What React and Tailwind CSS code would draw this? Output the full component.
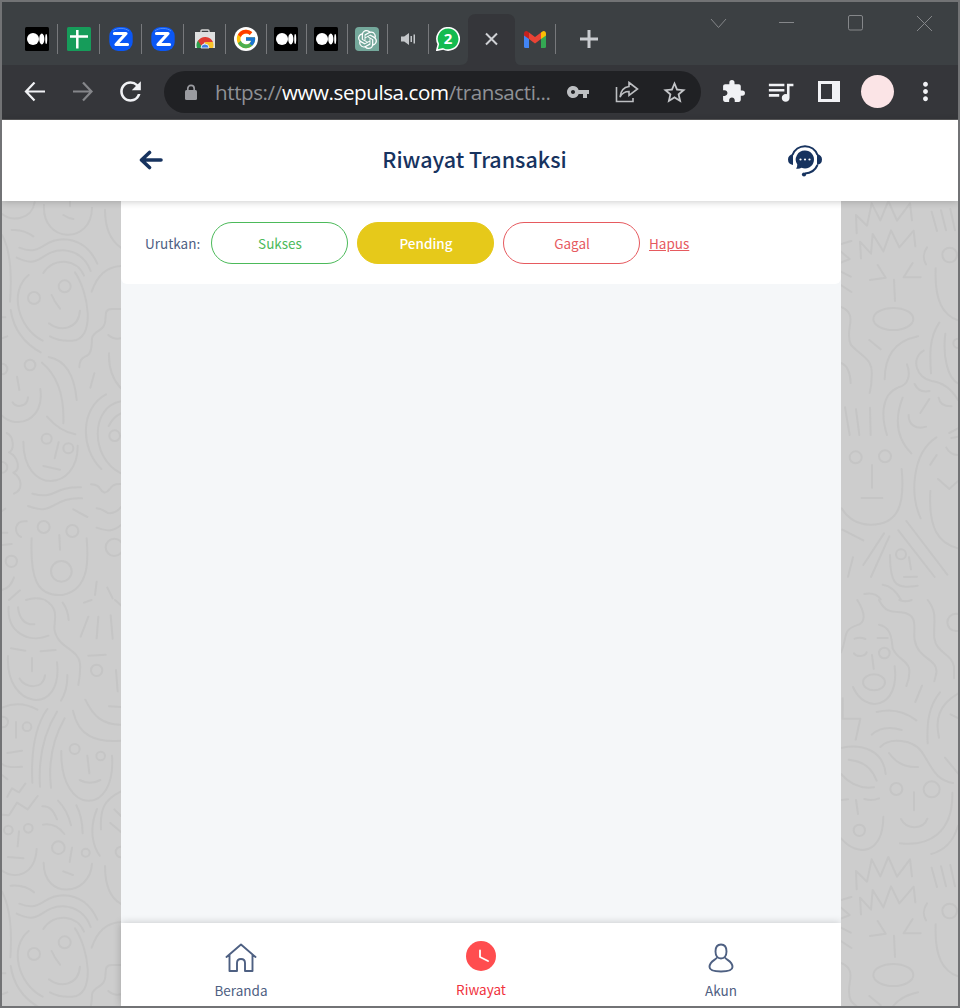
import { MdExtension, MdQueueMusic, MdVpnKey, MdStarBorder, MdMoreVert, MdRefresh } from 'react-icons/md';
import { SiOpenai } from 'react-icons/si';
import { FcGoogle } from 'react-icons/fc';

const Sep = () => <span className="h-[30px] w-px bg-[#77797c]" />;

function Medium() {
  return (
    <svg viewBox="0 0 24 24" className="size-6">
      <rect width="24" height="24" rx="1.5" fill="#000" />
      <circle cx="8" cy="12" r="6" fill="#fff" />
      <ellipse cx="16.8" cy="12" rx="2.6" ry="5.4" fill="#fff" />
      <ellipse cx="21.2" cy="12" rx="1" ry="5" fill="#fff" />
    </svg>
  );
}

function Sheets() {
  return (
    <svg viewBox="0 0 24 24" className="size-6">
      <rect width="24" height="24" rx="1.5" fill="#169c5a" />
      <path d="M3 9.6H21M10.3 3V21.5" stroke="#fff" strokeWidth="2.5" />
    </svg>
  );
}

function Zed() {
  return (
    <svg viewBox="0 0 24 24" className="size-6">
      <rect x=".3" width="23.4" height="24" rx="9" fill="#0b57f5" />
      <path d="M4 4C8 .5 16 .5 20 4" stroke="#4f8cf8" strokeWidth="1" fill="none" />
      <path d="M5.5 6.500H17L7 17.500H18.500" fill="none" stroke="#fff" strokeWidth="3.2" strokeLinejoin="round" strokeLinecap="round" />
    </svg>
  );
}

function Store() {
  return (
    <svg viewBox="0 0 24 24" className="size-6">
      <path d="M8 6V4Q8 3 9 3H15Q16 3 16 4V6" stroke="#d5d5d5" strokeWidth="1.4" fill="none" />
      <path d="M2 5H22V21H2Z" fill="#dfe0e0" />
      <path d="M4 21A8 8 0 0 1 5.5 13L10 21Z" fill="#2ca04c" />
      <path d="M12 15H20A8 8 0 0 1 20 21H12Z" fill="#f9c32b" />
      <path d="M5 14A8.5 8.5 0 0 1 20 15H12L8.5 19Z" fill="#df3c33" />
      <path d="M8 21A4 4 0 0 1 16 21Z" fill="#3d7fe6" stroke="#fff" strokeWidth=".8" />
    </svg>
  );
}

function Whatsapp() {
  return (
    <svg viewBox="0 0 24 24" className="size-6 shrink-0">
      <path d="M12.2 0.7A11.2 11.2 0 1 1 7 21.9L.8 23.3 2.3 17.2A11.2 11.2 0 0 1 12.2.7Z" fill="#14bb50" stroke="#fff" strokeWidth="1.6" />
      <text x="12" y="17.4" textAnchor="middle" fill="#fff" fontFamily="Open Sans, sans-serif" fontSize="15" fontWeight="700">2</text>
    </svg>
  );
}

function Gmail() {
  return (
    <svg viewBox="0 0 22 17" className="h-[17px] w-[22px]">
      <path d="M0 3V15.5Q0 17 1.5 17H5V6Z" fill="#4285f4" />
      <path d="M22 3V15.5Q22 17 20.500 17H17V6Z" fill="#34a853" />
      <path d="M5 1.500L11 6 17 1.500V8L11 12.500 5 8Z" fill="#ea4335" />
      <path d="M0 3Q0 0 2.500 0 3.500 0 5 1.500V8L0 4.500Z" fill="#c5221f" />
      <path d="M22 3Q22 0 19.500 0 18.500 0 17 1.500V8L22 4.500Z" fill="#fbbc04" />
    </svg>
  );
}

function TabStrip() {
  return (
    <div className="flex h-[63px] bg-[#3c4043]">
      <div className="flex h-[50px] w-[465px] items-center self-start pl-[23px] pt-[24px]">
        <div className="flex w-[442px] items-center">
          <div className="flex w-[32px]"><Medium /></div><Sep />
          <div className="flex w-[41px] justify-center"><Sheets /></div><Sep />
          <div className="flex w-[41px] justify-center"><Zed /></div><Sep />
          <div className="flex w-[41px] justify-center"><Zed /></div><Sep />
          <div className="flex w-[41px] justify-center"><Store /></div><Sep />
          <div className="flex w-[40px] justify-center pr-px">
            <span className="flex size-6 items-center justify-center rounded-full bg-white"><FcGoogle size={22} /></span>
          </div><Sep />
          <div className="flex w-[39px] justify-center pr-px"><Medium /></div><Sep />
          <div className="flex w-[40px] justify-center pr-[2px]"><Medium /></div><Sep />
          <div className="flex w-[39px] justify-center pr-px">
            <span className="flex size-6 items-center justify-center rounded-[4px] rounded-br-none bg-[#74a89b] text-white"><SiOpenai size={19} /></span>
          </div><Sep />
          <div className="flex w-[40px] justify-center pr-px">
            <svg viewBox="0 0 16 16" className="size-4" fill="#c4c7ca">
              <path d="M1 5.500H4.200L9 2V14L4.200 10.500H1Z" />
              <path d="M10.500 5H12V11H10.500ZM13.500 3.500H15V12.500H13.500Z" />
            </svg>
          </div><Sep />
          <div className="flex w-[38px] justify-center"><Whatsapp /></div>
        </div>
      </div>
      <svg viewBox="0 0 60 51" className="-ml-[7px] mt-3 h-[51px] w-[60px]">
        <path d="M0 51Q8 51 8 43V8Q8 0 16 0H47Q55 0 55 8V43Q55 51 60 51Z" fill="#35363a" />
        <path d="M26 19.500L37 30.500M37 19.500L26 30.500" stroke="#cfd1d4" strokeWidth="2" />
      </svg>
      <div className="mt-3 flex h-[50px] items-center pl-[4px]">
        <Gmail />
        <span className="ml-[9px] h-[30px] w-px bg-[#77797c]" />
        <svg viewBox="0 0 20 20" className="ml-[23px] size-5"><path d="M1 10H19M10 1V19" stroke="#c9ccd0" strokeWidth="3" /></svg>
      </div>
      <svg viewBox="0 0 240 40" className="ml-auto mr-[8px] h-10 w-[240px]" fill="none" stroke="#85878a" strokeWidth="1">
        <path d="M1 17L8.500 25.500 16 17M69 20.500H84M207 14L222 29M222 14L207 29" />
        <rect x="138.500" y="13.500" width="14" height="14.500" rx="1.500" />
      </svg>
    </div>
  );
}

function Toolbar() {
  return (
    <div className="flex h-[55px] items-center border-b border-[#59595b] bg-[#35363a] pl-[22px] text-[#f1f2f5]">
      <svg viewBox="0 0 22 20" className="h-5 w-[22px]" fill="none" stroke="#f1f2f5" strokeWidth="2.200"><path d="M10.500 .5L2 9.500 10.500 18.500M2 9.500H21" /></svg>
      <svg viewBox="0 0 22 20" className="ml-[26px] h-5 w-[22px]" fill="none" stroke="#85868a" strokeWidth="2.200"><path d="M11 .5L19.500 9.500 11 18.500M1 9.500H19.500" /></svg>
      <MdRefresh size={31} className="mb-px ml-[21px]" />
      <div className="ml-[18px] flex h-[42px] w-[537px] items-center rounded-full bg-[#202124] pl-[20px]">
        <svg viewBox="0 0 14 17" className="h-[17px] w-[14px]"><rect x="1" y="6" width="12" height="10" rx="1.5" fill="#9a9ba0" /><path d="M3.800 7V4.500A3.200 3.200 0 0 1 10.200 4.500V7" fill="none" stroke="#9a9ba0" strokeWidth="1.700" /></svg>
        <span className="ml-[17px] w-[340px] whitespace-nowrap font-['Open_Sans',sans-serif] text-[20.600px] tracking-[-0.420px] text-[#8f9196]">
          https://<span className="text-white">www.sepulsa.com</span>/transacti...
        </span>
        <MdVpnKey size={24} className="ml-[11px] text-[#bdbfc2]" />
        <svg viewBox="0 0 24 22" className="ml-[25px] h-[22px] w-6" fill="none" stroke="#bdbfc2" strokeWidth="1.600">
          <path d="M1.500 6V20.500H18V17M14 1.500L22.500 8 14 14.500V10.500Q8 10.500 5 16 6 6.500 14 5.500Z" />
        </svg>
        <MdStarBorder size={27} className="ml-[22px] text-[#c4c6c9]" />
      </div>
      <MdExtension size={25} className="ml-[20px] mb-px" />
      <MdQueueMusic size={31} className="ml-[19px] mb-px" />
      <svg viewBox="0 0 22 21" className="mb-px ml-[22px] h-[21px] w-[22px]"><path d="M0 0H22V21H0ZM3 3V18H14V3Z" fill="#f1f2f5" fillRule="evenodd" /></svg>
      <span className="mb-px ml-[21px] size-[33px] rounded-full bg-[#fbe4e6]" />
      <MdMoreVert size={29} className="mb-px ml-[17px]" />
    </div>
  );
}

function Headset() {
  return (
    <svg viewBox="0 0 36 34" className="h-[34px] w-9" fill="none" stroke="#17335f">
      <path d="M5.500 11A13.300 13.300 0 0 1 30.500 11" strokeWidth="2" />
      <path d="M30.500 21Q27 29 18 29.500" strokeWidth="2" />
      <path d="M6 10Q1 11 1 15.500T6 21ZM30 10Q35 11 35 15.500T30 21Z" fill="#17335f" stroke="none" />
      <path d="M18 6.500A9 9 0 1 1 14.500 23.800Q12 25.200 9 24.500 10.500 22.500 10.300 20.500A9 9 0 0 1 18 6.500Z" fill="#17335f" stroke="none" />
      <circle cx="17" cy="30.500" r="2.100" fill="#17335f" stroke="none" />
      <g fill="#fff" stroke="none"><circle cx="13.500" cy="15.500" r="1.100" /><circle cx="18" cy="15.500" r="1.100" /><circle cx="22.500" cy="15.500" r="1.100" /></g>
    </svg>
  );
}

function LeftDoodles() {
  return (
    <svg viewBox="6 18 357 2415" className="h-[805px] w-[119px] shrink-0 bg-[#cdcdcd]" fill="none" stroke="#c5c5c5" strokeWidth="6" strokeLinecap="round" strokeLinejoin="round">
      <path d="M6 57C35 80 95 75 104 22M132 30C125 145 275 150 276 38M190 60Q205 70 220 72M35 105Q70 102 100 124M210 18V34M315 44Q315 125 363 158M6 120Q40 180 30 320" />
      <g id="wavy-face">
        <path d="M58 158C125 185 125 133 190 133Q260 135 292 206M50 188C125 225 120 165 190 166Q250 170 272 228M130 234C160 185 230 190 252 242M86 240C25 290 55 400 128 437M225 232C265 290 290 435 215 437Q180 440 150 424M147 385C180 410 235 405 240 347M155 300Q163 320 180 341M275 290C290 245 320 215 363 213M32 345Q45 430 122 472" />
        <circle cx="102" cy="309" r="18" /><circle cx="194" cy="274" r="18" />
        <path d="M363 342H335C305 342 325 375 310 395C300 410 280 410 276 430C275 470 270 480 255 485Q238 492 238 517M6 367H16M6 430L22 424M325 420Q340 434 363 430" />
      </g>
      <circle cx="90" cy="510" r="16" /><circle cx="6" cy="522" r="16" />
      <path d="M146 486Q220 500 230 615M126 503Q195 560 190 685M327 475Q325 540 363 580M283 535L271 578M51 545L58 585M38 622C50 640 82 635 84 607M6 662C50 705 135 675 121 582M141 665Q180 710 226 718M318 598C240 640 240 760 304 822M363 619C270 635 270 790 363 835M326 693Q340 665 363 655M20 714C43 725 43 765 27 772C55 785 63 825 40 833C67 850 70 885 42 896M70 740C70 900 235 890 233 752M176 742L164 790M130 813L180 824" />
      <circle cx="140" cy="731" r="15" /><circle cx="205" cy="760" r="15" /><circle cx="344" cy="722" r="16" /><circle cx="6" cy="817" r="16" />
      <path d="M97 896C170 915 155 875 243 877M84 933C165 965 155 905 246 910M220 943L262 966M273 868C305 870 295 885 313 893C335 890 325 865 363 867M290 940C310 940 318 955 330 955Q350 953 363 936M290 998C325 1010 340 1010 363 990M80 979C42 975 40 1015 63 1026M6 948L16 941M6 1013H22M6 1050L35 1047M95 1030C90 1150 110 1205 187 1200C270 1185 265 1090 260 1030M178 1020L180 1064" />
      <circle cx="131" cy="996" r="18" /><circle cx="217" cy="1008" r="18" /><circle cx="184" cy="1129" r="31" /><circle cx="34" cy="1099" r="17" /><circle cx="343" cy="1057" r="26" />
      <path d="M6 1185Q32 1178 42 1147M27 1215L60 1186M78 1215Q105 1205 130 1213M290 1160L285 1200M322 1178L338 1210" />
      <g transform="translate(0 1215)">
        <path d="M26 20C20 100 90 130 145 107M54 22Q60 75 103 73M135 0C175 25 165 50 163 85C170 145 235 145 240 190Q242 220 235 255M188 8Q204 30 206 60M252 8L275 0M265 50L242 110M295 50L290 115M332 46L338 116M345 0L363 16M33 145L76 152M122 154L167 150M96 174V214M24 168C15 330 190 350 171 187M59 236C75 265 130 270 135 226M202 225Q203 270 183 302M265 167L317 164M348 210L353 274M256 299C280 350 310 375 363 374M219 332C235 410 290 428 363 422M327 319L363 321M6 323Q60 300 112 329M48 366V413M22 459L66 452M6 492Q20 505 66 500M6 525L22 538M142 327Q90 400 97 548M171 335Q112 430 120 560M194 355Q140 450 153 563M184 453C180 650 350 650 336 467M262 467L268 520M239 540Q270 557 301 540M22 590L36 565 57 577 76 551M6 644L27 646 51 608 83 628 113 588M57 694L53 739M24 771L70 775M6 812C45 840 105 825 110 747M127 619C155 618 163 640 171 658M174 602Q202 630 213 676M229 616Q247 650 248 700M129 674Q167 668 193 702M131 788C130 900 270 890 276 791M216 743L209 786M190 814L219 825M291 627C265 690 280 740 299 767M363 574C310 600 300 630 303 688M343 628L363 648M331 669L363 696M315 798Q315 885 363 912M32 857Q75 853 102 877M6 875Q40 940 31 1072" />
        <circle cx="290" cy="211" r="17" /><circle cx="8" cy="366" r="16" /><circle cx="81" cy="380" r="13" /><circle cx="224" cy="447" r="15" /><circle cx="302" cy="468" r="13" /><circle cx="25" cy="690" r="13" /><circle cx="85" cy="685" r="13" /><circle cx="175" cy="743" r="19" /><circle cx="257" cy="758" r="12" /><circle cx="363" cy="756" r="16" />
      </g>
      <use href="#wavy-face" y="1968" />
    </svg>
  );
}

function RightDoodles() {
  return (
    <svg viewBox="18 18 351 2415" className="h-[805px] w-[117px] shrink-0 bg-[#cdcdcd]" fill="none" stroke="#c5c5c5" strokeWidth="6" strokeLinecap="round" strokeLinejoin="round">
      <g id="spiky-face">
        <path d="M65 115L63 60 96 92 110 25 136 76 160 18 186 77 225 25 231 76M78 190L75 140 108 176 113 117 145 169 168 106 193 157 236 107 241 154M128 210L152 248 105 255M233 204L206 247H257M177 254L180 318M290 50L306 108M318 46L333 106M346 42L360 106M276 157C263 175 265 195 273 208M302 220C298 320 325 360 369 376M18 147L49 138M18 170L44 192 18 203M18 230L47 245M18 270L49 291" />
        <circle cx="344" cy="180" r="22" /><ellipse cx="175" cy="372" rx="60" ry="33" />
        <path d="M18 336C75 360 25 405 48 450C85 490 115 490 110 545Q110 570 104 594M103 435L137 463M249 424C175 440 150 485 149 553" />
      </g>
      <path d="M18 504Q45 515 47 564M313 383C280 430 285 490 288 535M331 416C322 490 340 550 369 565M266 467C225 490 245 550 290 558Q340 565 369 615M216 508C228 540 220 570 190 577C135 600 140 670 156 720M203 608C175 680 190 735 229 775M239 567Q252 595 284 588M311 608Q315 635 350 634M283 612L256 654M221 660C220 690 245 705 273 695M30 637L44 720M63 643L73 720M105 638L107 720M111 810V878M80 909H142M200 822C210 930 190 990 105 989Q50 988 20 940M304 727C230 775 225 900 257 970M369 700L343 714M369 725L349 729M334 758Q345 780 369 780M305 780L286 809M309 852L343 882 369 858M286 888C280 1000 310 1045 369 1060M22 1004L85 1036M54 1087L39 1145M147 1015L85 1110M163 1024L108 1146M190 1006L299 1146M214 978L337 1139M165 1080C165 1180 190 1180 248 1172M222 1087L228 1123M207 1146L246 1145M143 1169Q175 1173 197 1213M88 1197Q120 1190 137 1213" />
      <circle cx="62" cy="787" r="18" /><circle cx="150" cy="784" r="18" /><circle cx="198" cy="1078" r="15" /><circle cx="369" cy="445" r="14" />
      <g transform="translate(0 1215)">
        <path d="M67 0C95 45 90 70 65 76C20 90 38 115 18 157M132 0C150 35 165 35 198 37C255 42 233 90 239 120C250 180 310 175 304 220L298 244M193 0Q212 8 230 0M278 0C310 40 294 70 298 115C305 160 350 160 357 200V235M132 74C165 80 170 110 173 145C185 175 215 180 222 204Q226 230 214 258M59 116Q75 110 91 117M128 114H158M57 160C65 172 90 170 95 157M111 165L116 206M54 261C90 345 195 325 179 199M261 257L241 306M23 295V356H76L62 419M125 336Q190 320 244 361M110 404Q145 373 200 390M315 277C280 320 275 370 278 430M369 281C310 315 300 360 312 413M347 343L369 354M18 444C80 430 145 450 152 522M18 522Q60 570 117 562M41 479Q105 485 125 542M136 441C165 410 235 420 260 455C290 500 300 540 354 549M162 459Q195 505 249 501M330 473L369 520M18 600L39 598M88 597Q110 604 132 595M63 600L69 642M18 715C70 775 145 760 145 650M237 577V631M198 657C215 690 265 690 277 656M352 578C355 700 280 740 195 730M289 762Q350 745 369 677" />
        <circle cx="148" cy="159" r="16" /><ellipse cx="117" cy="247" rx="33" ry="24" /><circle cx="363" cy="67" r="26" /><circle cx="184" cy="567" r="18" /><circle cx="290" cy="568" r="24" /><circle cx="73" cy="691" r="17" />
      </g>
      <use href="#spiky-face" y="1968" />
    </svg>
  );
}

function Pill({ children, className }) {
  return <button className={`flex h-[42px] w-[137px] items-center justify-center rounded-full border pl-px ${className}`}>{children}</button>;
}

export default function App() {
  return (
    <div className="h-[1008px] w-[960px] overflow-hidden border-2 border-[#727375] bg-white font-['Noto_Sans_CJK_SC',sans-serif] text-[#4e6082]">
      <TabStrip />
      <Toolbar />
      <header className="relative z-10 flex h-[81px] items-center justify-between bg-white pl-[136px] pr-[135px] shadow-[0_1px_7px_rgba(0,0,0,0.2)]">
        <svg viewBox="0 0 26 20" className="mb-px h-5 w-[26px]" fill="none" stroke="#17335f" strokeWidth="3.600" strokeLinecap="round" strokeLinejoin="round"><path d="M11.500 2.500L3.500 10 11.500 17.500M4 10H23" /></svg>
        <h1 className="mb-[2px] mr-[2px] text-[21.500px] font-medium text-[#17335f]">Riwayat Transaksi</h1>
        <Headset />
      </header>
      <div className="flex h-[805px]">
        <LeftDoodles />
        <main className="flex w-[720px] shrink-0 flex-col bg-[#f5f7f9]">
          <section className="flex h-[83px] items-center rounded-b-md bg-white pl-[23px] pt-px text-[13.500px]">
            <span className="w-[67px] pl-px">Urutkan:</span>
            <div className="flex gap-[9px]">
              <Pill className="border-[#4cba5a] text-[#4cba5a]">Sukses</Pill>
              <Pill className="border-[#e6c91a] bg-[#e6c91a] font-medium text-white">Pending</Pill>
              <Pill className="border-[#e65a5f] text-[#e65a5f]">Gagal</Pill>
            </div>
            <a className="ml-[9px] text-[#e65a5f] underline">Hapus</a>
          </section>
          <nav className="mt-auto grid h-[83px] grid-cols-3 bg-white text-[13.500px] shadow-[0_0_8px_rgba(0,0,0,0.2)]">
            <div className="flex flex-col items-center pt-[20px]">
              <svg viewBox="0 0 32 30" className="h-[30px] w-8" fill="none" stroke="#4e6082" strokeWidth="1.900" strokeLinejoin="round" strokeLinecap="round"><path d="M1.500 14L16 1.500 30.500 14M4.500 12V28H12V20Q12 16 16 16T20 20V28H27.500V12" /></svg>
              <span className="mt-[7px]">Beranda</span>
            </div>
            <div className="flex flex-col items-center pt-[18px] text-[#f0323c]">
              <svg viewBox="0 0 30 30" className="size-[30px]"><circle cx="15" cy="15" r="15" fill="#ff4d4f" /><path d="M14 9.500V16L22 20" fill="none" stroke="#fff" strokeWidth="1.800" strokeLinecap="round" strokeLinejoin="round" /></svg>
              <span className="mt-[8px]">Riwayat</span>
            </div>
            <div className="flex flex-col items-center pt-[20px]">
              <svg viewBox="0 0 26 30" className="h-[30px] w-[26px]" fill="none" stroke="#4e6082" strokeWidth="1.900"><path d="M13 1.500C9 1.500 7.500 4.500 7.500 8.500S9.500 15.500 13 15.500 18.500 12.500 18.500 8.500 17 1.500 13 1.500ZM9 14.500C8 17 1.500 18 1.500 24C1.500 27.500 6 28.500 13 28.500S24.500 27.500 24.500 24C24.500 18 18 17 17 14.500" /></svg>
              <span className="mt-[7px]">Akun</span>
            </div>
          </nav>
        </main>
        <RightDoodles />
      </div>
    </div>
  );
}
